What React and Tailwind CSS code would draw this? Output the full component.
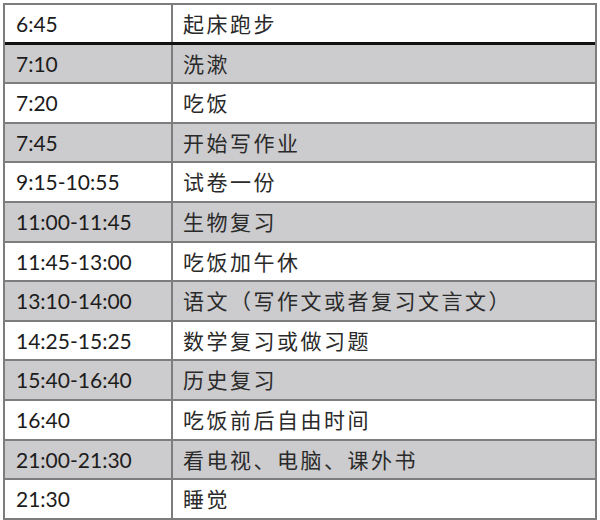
const rows = [
  ["6:45", "起床跑步"],
  ["7:10", "洗漱"],
  ["7:20", "吃饭"],
  ["7:45", "开始写作业"],
  ["9:15-10:55", "试卷一份"],
  ["11:00-11:45", "生物复习"],
  ["11:45-13:00", "吃饭加午休"],
  ["13:10-14:00", "语文（写作文或者复习文言文）"],
  ["14:25-15:25", "数学复习或做习题"],
  ["15:40-16:40", "历史复习"],
  ["16:40", "吃饭前后自由时间"],
  ["21:00-21:30", "看电视、电脑、课外书"],
  ["21:30", "睡觉"],
];

export default function App() {
  return (
    <div className="w-[600px] h-[520px] bg-white pl-[3px] pt-[3px]">
      <div className="w-[594px] border-x-2 border-t-2 border-[#7d7d7d] text-[#1c1c1c]">
        {rows.map(([time, task], i) => (
          <div
            key={i}
            className={
              "flex h-[39.6px] border-b-2 " +
              (i === 0 ? "h-[39.4px] border-b-[3px] border-[#111]" : "border-[#7d7d7d]") +
              (i % 2 === 1 ? " bg-[#cccbcd]" : " bg-white")
            }
          >
            <div className="w-[168px] shrink-0 border-r-2 border-[#7d7d7d] flex items-center pl-[11px] font-['Lato','Liberation_Sans',sans-serif] text-[21px]">
              {time}
            </div>
            <div className="flex-1 flex items-center pl-[10px] font-['Noto_Sans_CJK_SC','Noto_Sans',sans-serif] text-[21px] tracking-[2.5px] font-normal text-[#2a2a2a]">
              {task}
            </div>
          </div>
        ))}
      </div>
    </div>
  );
}
